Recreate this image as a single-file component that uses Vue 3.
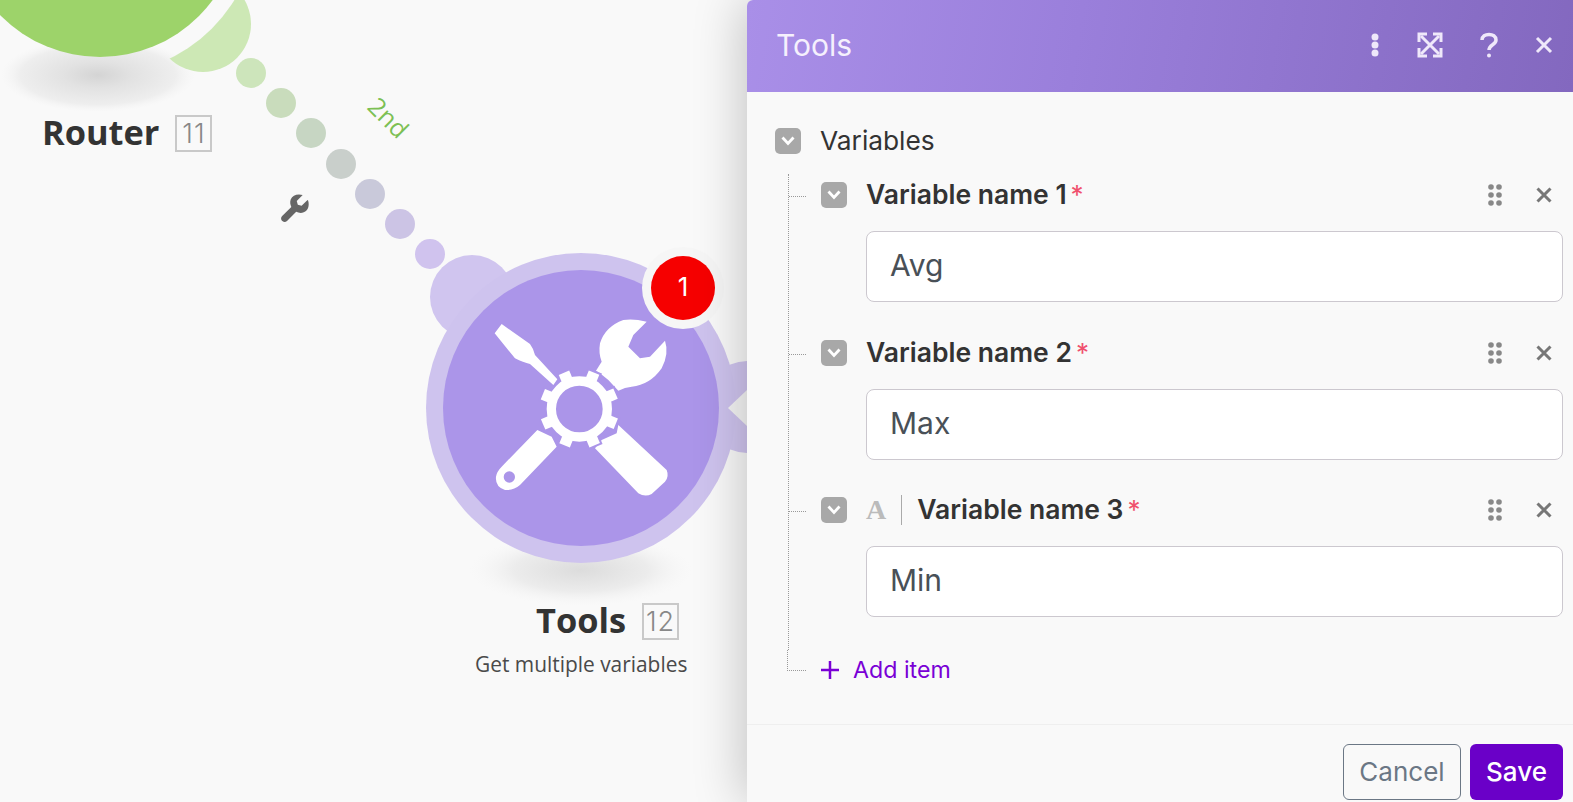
<script setup>
const dots = [
  { cx: 251, cy: 73, fill: '#cde5bb' }, { cx: 281, cy: 103, fill: '#c9dcbc' },
  { cx: 311, cy: 133, fill: '#c7d6c3' }, { cx: 341, cy: 164, fill: '#c9cfcb' },
  { cx: 370, cy: 194, fill: '#c9c9da' }, { cx: 400, cy: 224, fill: '#ccc4e5' },
  { cx: 430, cy: 254, fill: '#d0c3ee' },
]
const teeth = [22, 67, 112, 157, 202, 247, 292, 337]
const items = [
  { label: 'Variable name 1', value: 'Avg', typed: false },
  { label: 'Variable name 2', value: 'Max', typed: false },
  { label: 'Variable name 3', value: 'Min', typed: true },
]
</script>

<template>
  <div class="app">
    <div class="canvas">
      <svg class="art" width="747" height="802" viewBox="0 0 747 802">
        <defs>
          <radialGradient id="sh">
            <stop offset="0" stop-color="#d4d4d4" />
            <stop offset=".35" stop-color="#e2e2e2" />
            <stop offset=".8" stop-color="#eeeeee" />
            <stop offset="1" stop-color="#f4f4f4" stop-opacity="0" />
          </radialGradient>
          <radialGradient id="sh2">
            <stop offset="0" stop-color="#dcdcdc" />
            <stop offset=".6" stop-color="#ececec" />
            <stop offset="1" stop-color="#f6f6f6" stop-opacity="0" />
          </radialGradient>
          <mask id="blobcut" maskUnits="userSpaceOnUse" x="0" y="-40" width="300" height="160">
            <rect x="0" y="-40" width="300" height="160" fill="#fff" />
            <circle cx="100" cy="-83" r="158" fill="#000" />
          </mask>
        </defs>
        <ellipse cx="98" cy="75" rx="97" ry="37" fill="url(#sh)" />
        <circle cx="203" cy="24" r="48" fill="#cde8b5" mask="url(#blobcut)" />
        <circle cx="100" cy="-83" r="140" fill="#9dd36a" />
        <circle v-for="d in dots" :key="d.cx" :cx="d.cx" :cy="d.cy" r="15" :fill="d.fill" />
        <g transform="translate(293.500 208) scale(1.080) translate(-292 -204)">
          <path fill="#666" d="M305 196.500 l-5.500 5.500 -3.500 -1 -1 -3.500 5.500 -5.500 c-4.500 -1.500 -9.500 0 -11 4 -1 2.500 -.5 5 .5 7 l-8.500 8.500 c-3 3 1.500 7.500 4.500 4.500 l8.500 -8.500 c2 1 4.500 1.500 7 .5 4 -1.500 5.500 -6.500 4 -11z" />
        </g>

        <ellipse cx="581" cy="570" rx="112" ry="36" fill="url(#sh2)" />
        <circle cx="472" cy="297" r="42" fill="#d0c5ef" />
        <circle cx="748" cy="407" r="46" fill="#d0c5ef" />
        <circle cx="581" cy="408" r="155" fill="#cec3ee" />
        <polygon points="728,408 748,389 748,427" fill="#f5f5f5" />
        <circle cx="581" cy="408" r="138" fill="#ab95e9" />
        <g transform="translate(420 240) scale(.33333)">
          <g fill="#fff">
            <path d="M224 280 L245 252 L330 312 Q340 325 345 345 L412 418 L400 435 L330 372 Q310 368 285 355 Z" />
            <path d="M528 392 L545 365 Q535 340 540 310 Q555 260 610 240 Q640 235 680 245 L640 285 L625 320 L660 355 L690 350 L735 302 Q748 340 725 385 Q690 435 635 440 Q615 442 595 452 L565 420 L540 400 Z" />
            <path d="M352 570 L395 590 L410 620 L300 735 Q280 752 255 750 Q225 740 228 710 Q230 695 245 680 Z" />
            <path d="M595 555 L740 690 Q748 710 735 725 L695 762 Q675 772 655 760 L525 625 L545 600 L590 580 Z" />
          </g>
          <circle cx="268" cy="711" r="17" fill="#ab95e9" />
          <g transform="translate(478 507)">
            <circle r="104" fill="#ab95e9" />
            <rect v-for="t in teeth" :key="'b' + t" x="-23" y="-124" width="46" height="40" fill="#ab95e9" :transform="`rotate(${t})`" />
            <rect v-for="t in teeth" :key="t" x="-17" y="-118" width="34" height="36" fill="#fff" :transform="`rotate(${t})`" />
            <circle r="84" fill="none" stroke="#fff" stroke-width="28" />
          </g>
        </g>
        <circle cx="683" cy="288" r="41" fill="#f6f6f6" />
        <circle cx="683" cy="288" r="32" fill="#f60000" />
      </svg>

      <span class="badge-num">1</span>
      <div class="node-title router"><b>Router</b><i>11</i></div>
      <div class="node-title tools"><b>Tools</b><i>12</i></div>
      <div class="node-sub">Get multiple variables</div>
      <span class="route">2nd</span>
    </div>

    <aside class="panel">
      <header class="head">
        <h1>Tools</h1>
        <div class="head-icons">
          <svg width="8" height="24" viewBox="0 0 8 24"><circle cx="4" cy="4" r="3.500" /><circle cx="4" cy="12" r="3.500" /><circle cx="4" cy="20" r="3.500" /></svg>
          <svg width="26" height="26" viewBox="0 0 26 26" class="line thin"><path d="M4 4 L22 22 M22 4 L4 22" /><path d="M2 10 V2 H10 M16 2 H24 V10 M2 16 V24 H10 M16 24 H24 V16" /></svg>
          <svg width="18" height="26" viewBox="0 0 18 26" class="line"><path d="M2 8 C2 0.500 16 0.500 16 8 C16 13 9 12.500 9 18" /><circle cx="9" cy="23.500" r="2" class="solid" /></svg>
          <svg width="18" height="18" viewBox="0 0 18 18" class="line thin"><path d="M2 2 L16 16 M16 2 L2 16" /></svg>
        </div>
      </header>

      <div class="body">
        <div class="section">
          <span class="toggle"><svg width="14" height="10" viewBox="0 0 14 10"><path d="M1.500 1.500 L7 7.500 L12.500 1.500" /></svg></span>
          <span class="section-label">Variables</span>
        </div>
        <div class="items">
          <div v-for="item in items" :key="item.label" class="item">
            <div class="item-head">
              <span class="toggle"><svg width="14" height="10" viewBox="0 0 14 10"><path d="M1.500 1.500 L7 7.500 L12.500 1.500" /></svg></span>
              <template v-if="item.typed">
                <span class="type-a">A</span>
                <span class="type-sep"></span>
              </template>
              <span class="item-label">{{ item.label }}</span>
              <span class="req">*</span>
              <span class="spacer"></span>
              <svg class="grip" width="14" height="22" viewBox="0 0 14 22">
                <circle cx="3" cy="3" r="2.800" /><circle cx="11" cy="3" r="2.800" />
                <circle cx="3" cy="11" r="2.800" /><circle cx="11" cy="11" r="2.800" />
                <circle cx="3" cy="19" r="2.800" /><circle cx="11" cy="19" r="2.800" />
              </svg>
              <svg class="remove" width="18" height="18" viewBox="0 0 18 18"><path d="M2.500 2.500 L15.500 15.500 M15.500 2.500 L2.500 15.500" /></svg>
            </div>
            <div class="field">{{ item.value }}</div>
          </div>
        </div>
        <div class="add">
          <svg width="20" height="20" viewBox="0 0 20 20"><path d="M10 1 V19 M1 10 H19" /></svg>
          <span>Add item</span>
        </div>
      </div>

      <footer class="foot">
        <button class="btn cancel">Cancel</button>
        <button class="btn save">Save</button>
      </footer>
    </aside>
  </div>
</template>

<style>
html, body { margin: 0; overflow: hidden; background: #f9f9f9; }
</style>

<style scoped>
.app {
  display: flex;
  width: 1573px;
  height: 802px;
  overflow: hidden;
  background: #f9f9f9;
  font-family: Inter, "Liberation Sans", sans-serif;
}
.canvas { position: relative; width: 747px; height: 802px; flex: none; }
.art { position: absolute; left: 0; top: 0; }
.badge-num {
  position: absolute; left: 663px; top: 269px; width: 40px; text-align: center;
  color: #fff; font-size: 26px; line-height: 36px;
}
.node-title {
  position: absolute; display: flex; align-items: center; gap: 16px;
  font-family: "Open Sans", sans-serif; color: #333;
}
.node-title b { font-size: 34.400px; font-weight: 700; line-height: 38px; margin-top: -3px; }
.node-title i {
  box-sizing: border-box; width: 37px; height: 37px; border: 2px solid #c9c9c9;
  display: flex; align-items: center; justify-content: center;
  font: 300 27px Inter, sans-serif; color: #888; letter-spacing: 1px;
}
.router { left: 42px; top: 115px; }
.tools { left: 536px; top: 603px; }
.node-sub {
  position: absolute; left: 475px; top: 650px; font: 400 20.900px/28px "Open Sans", sans-serif; color: #4a4a4a;
}
.route {
  position: absolute; left: 364px; top: 100px; width: 50px; text-align: center;
  font: 400 25px/34px "Open Sans", sans-serif; color: #7cc054; transform: rotate(45deg);
}
.panel {
  position: relative; width: 826px; height: 802px; flex: none;
  display: flex; flex-direction: column; background: #f9f9f9;
  border-top-left-radius: 6px;
  box-shadow: -4px 0 50px rgba(0, 0, 0, .22);
}
.head {
  height: 92px; flex: none; box-sizing: border-box; display: flex; align-items: center; justify-content: space-between;
  padding: 0 20px 2px 29px; border-top-left-radius: 6px;
  background: linear-gradient(100deg, #a98fe8 0%, #9a7fdb 40%, #8368bf 100%);
}
.head h1 { margin: 0 0 1px; font-size: 30px; font-weight: 400; color: #f5f0fd; }
.head-icons { display: flex; align-items: center; gap: 0; }
.head-icons svg { display: block; fill: #efe8fa; }
.head-icons svg:nth-child(2) { margin-left: 38px; }
.head-icons svg:nth-child(3) { margin-left: 37px; }
.head-icons svg:nth-child(4) { margin-left: 37px; }
.head-icons .line { fill: none; stroke: #efe8fa; stroke-width: 3.500; }
.head-icons .thin { stroke-width: 3; }
.line .solid { fill: #efe8fa; stroke: none; }
.body { flex: 1; padding: 36px 10px 0 28px; }
.section { display: flex; align-items: center; height: 26px; }
.toggle {
  width: 26px; height: 26px; border-radius: 5px; background: #a8a8a8; flex: none;
  display: flex; align-items: center; justify-content: center;
}
.toggle svg { fill: none; stroke: #fff; stroke-width: 2.800; }
.section-label { margin: 0 0 2px 19px; font-size: 26.300px; color: #333; }
.items {
  margin: 20px 0 0 13px; padding: 8px 0 0 32px; border-left: 1px dotted #999; height: 476px; box-sizing: border-box;
}
.item { position: relative; margin-bottom: 37.500px; }
.item::before {
  content: ""; position: absolute; left: -32px; top: 14px; width: 17px; border-top: 1px dotted #999;
}
.item-head { display: flex; align-items: center; height: 26px; }
.item-label { margin: 0 0 2px 19px; font-size: 26.500px; font-weight: 600; color: #333; white-space: nowrap; }
.type-a { margin-left: 19px; font: 700 28px/26px "Liberation Serif", serif; color: #bbb; }
.type-sep { width: 1px; height: 30px; background: #aaa; margin-left: 15px; }
.type-sep + .item-label { margin-left: 15px; }
.req { margin-left: 4px; color: #f0506e; font-size: 26px; line-height: 26px; }
.spacer { flex: 1; }
.grip { fill: #888; display: block; }
.remove { margin-left: 33px; fill: none; stroke: #777; stroke-width: 3; display: block; margin-right: 10px; }
.field {
  box-sizing: border-box; height: 71px; margin: 23px 0 0 45px; padding: 0 0 3px 23px;
  display: flex; align-items: center; background: #fff;
  border: 1px solid #ccc8cf; border-radius: 8px; font-size: 30px; color: #495057;
}
.add {
  position: relative; height: 40px; margin-left: 45px; display: flex; align-items: center; gap: 13px;
  color: #7a00d6; font-size: 23.200px;
}
.add::before {
  content: ""; position: absolute; left: -33px; top: 0; width: 18px; height: 20px;
  border-left: 1px dotted #999; border-bottom: 1px dotted #999;
}
.add svg { fill: none; stroke: #7a00d6; stroke-width: 2.500; }
.foot {
  height: 78px; flex: none; box-sizing: border-box; display: flex; justify-content: flex-end; gap: 9px;
  padding: 19px 10px 2px 0; border-top: 1px solid #efefef;
}
.btn { height: 56px; border-radius: 6px; font: 400 26px Inter, sans-serif; cursor: pointer; padding: 0 0 2px; }
.cancel { width: 118px; background: transparent; border: 1.500px solid #6b7785; color: #6b7785; }
.save { width: 93px; background: #6a00c8; border: 0; color: #fff; font-weight: 500; }
</style>
